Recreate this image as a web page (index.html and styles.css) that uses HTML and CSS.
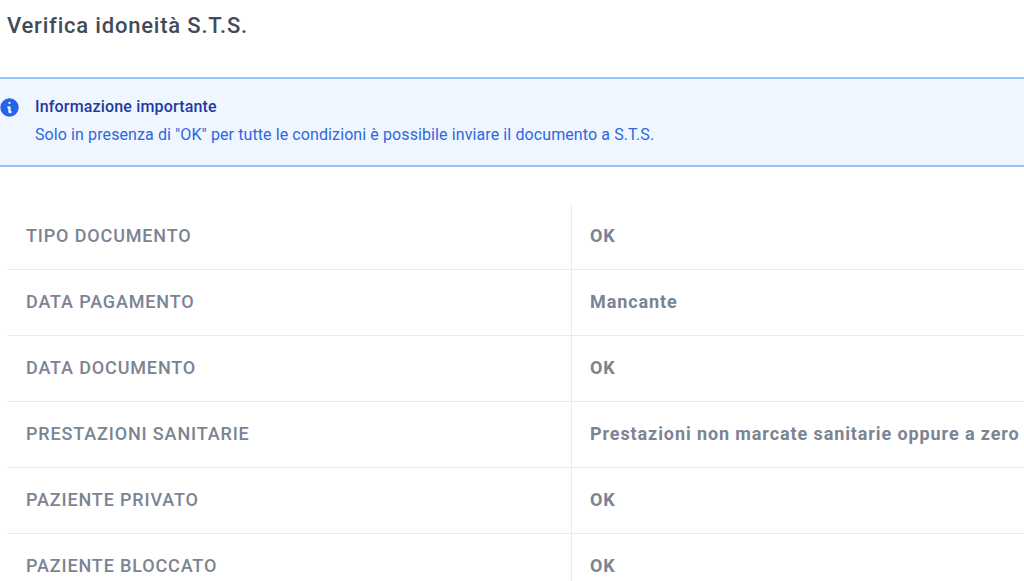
FILE: index.html
```html
<!DOCTYPE html>
<html lang="it">
<head>
<meta charset="utf-8">
<title>Verifica idoneità S.T.S.</title>
<link rel="stylesheet" href="styles.css">
</head>
<body>
<div class="page">
  <h1 class="title">Verifica idoneità S.T.S.</h1>
  <section class="alert">
    <svg class="alert-icon" viewBox="0 0 20 20" aria-hidden="true"><path fill-rule="evenodd" clip-rule="evenodd" d="M18 10a8 8 0 1 1-16 0 8 8 0 0 1 16 0zm-7-4a1 1 0 1 1-2 0 1 1 0 0 1 2 0zM9 9a1 1 0 0 0 0 2v3a1 1 0 0 0 1 1h1a1 1 0 1 0 0-2v-3a1 1 0 0 0-1-1H9z"/></svg>
    <div class="alert-body">
      <h2 class="alert-title">Informazione importante</h2>
      <p class="alert-text">Solo in presenza di "OK" per tutte le condizioni è possibile inviare il documento a S.T.S.</p>
    </div>
  </section>
  <dl class="checks">
    <div class="row"><dt class="label">TIPO DOCUMENTO</dt><dd class="value">OK</dd></div>
    <div class="row"><dt class="label">DATA PAGAMENTO</dt><dd class="value">Mancante</dd></div>
    <div class="row"><dt class="label">DATA DOCUMENTO</dt><dd class="value">OK</dd></div>
    <div class="row"><dt class="label">PRESTAZIONI SANITARIE</dt><dd class="value">Prestazioni non marcate sanitarie oppure a zero</dd></div>
    <div class="row"><dt class="label">PAZIENTE PRIVATO</dt><dd class="value">OK</dd></div>
    <div class="row"><dt class="label">PAZIENTE BLOCCATO</dt><dd class="value">OK</dd></div>
  </dl>
</div>
</body>
</html>
```
FILE: styles.css
```css
* { box-sizing: border-box; }
html, body { margin: 0; height: 100%; overflow: hidden; background: #fff; }
body { font-family: Roboto, "Liberation Sans", sans-serif; }
.page { height: 581px; overflow: hidden; }
.title {
  margin: 0;
  padding: 12px 0 0 7px;
  height: 77px;
  font-size: 22px;
  line-height: 28px;
  font-weight: 500;
  letter-spacing: 0.8px;
  color: #414b5a;
}
.alert {
  display: flex;
  height: 90px;
  background: #eff6ff;
  border-top: 2px solid #93c5fd;
  border-bottom: 2px solid #93c5fd;
  padding: 18px 0 0 0;
}
.alert-icon { width: 23px; height: 23px; fill: #2563eb; flex: none; margin: -1px 14px 0 -2px; }
.alert-title { margin: 0; font-size: 16px; line-height: 20px; font-weight: 500; letter-spacing: 0.17px; color: #1e3a9f; }
.alert-text { margin: 8px 0 0; font-size: 16px; line-height: 20px; letter-spacing: 0.1px; color: #2f66e0; }
.checks { margin: 37px 0 0 7px; }
.row { display: grid; grid-template-columns: 565px 1fr; height: 66px; border-bottom: 1px solid #e8eaf0; }
.label, .value { margin: 0 0 2px; display: flex; align-items: center; font-size: 18px; color: #7b8492; }
.label { margin-bottom: 0; padding: 0 0 2px 19px; font-weight: 500; letter-spacing: 0.85px; border-right: 1px solid #e8eaf0; }
.value { padding-left: 18px; font-weight: 700; letter-spacing: 0.9px; white-space: nowrap; }
```
